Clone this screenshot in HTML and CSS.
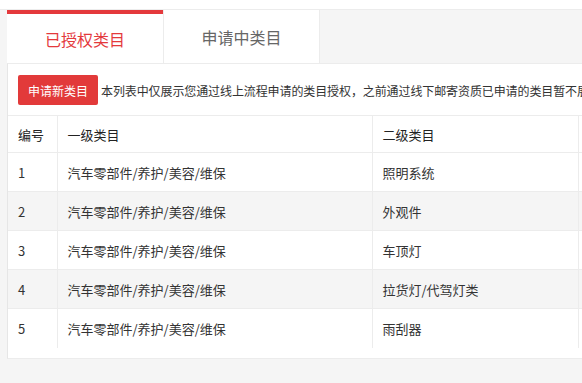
FILE: index.html
```html
<!DOCTYPE html>
<html lang="zh-CN">
<head>
    <meta charset="UTF-8">
    <meta name="viewport" content="width=device-width, initial-scale=1.0">
    <title>类目管理</title>
    <link rel="stylesheet" href="styles.css">
</head>
<body>
    <div class="leimu-wrap">
        <div class="leimu-tabs">
            <div class="leimu-tab active">已授权类目</div>
            <div class="leimu-tab">申请中类目</div>
        </div>

        <div class="leimu-panel">
            <div class="leimu-bar">
                <button class="shenqing-btn">申请新类目</button>
                <span class="leimu-tip">本列表中仅展示您通过线上流程申请的类目授权，之前通过线下邮寄资质已申请的类目暂不展示</span>
            </div>

            <table class="leimu-table">
                <colgroup>
                    <col class="col-num">
                    <col class="col-first">
                    <col class="col-second">
                    <col class="col-op">
                </colgroup>
                <thead>
                    <tr>
                        <th>编号</th>
                        <th>一级类目</th>
                        <th>二级类目</th>
                        <th></th>
                    </tr>
                </thead>
                <tbody>
                    <tr><td>1</td><td>汽车零部件/养护/美容/维保</td><td>照明系统</td><td></td></tr>
                    <tr><td>2</td><td>汽车零部件/养护/美容/维保</td><td>外观件</td><td></td></tr>
                    <tr><td>3</td><td>汽车零部件/养护/美容/维保</td><td>车顶灯</td><td></td></tr>
                    <tr><td>4</td><td>汽车零部件/养护/美容/维保</td><td>拉货灯/代驾灯类</td><td></td></tr>
                    <tr><td>5</td><td>汽车零部件/养护/美容/维保</td><td>雨刮器</td><td></td></tr>
                </tbody>
            </table>
        </div>
    </div>
</body>
</html>
```

FILE: styles.css
```css
* {
    margin: 0;
    padding: 0;
    box-sizing: border-box;
    font-family: "Noto Sans CJK SC", "Noto Sans", sans-serif;
}

body {
    background: #fff;
    padding-top: 9px;
    overflow: hidden;
    height: 100vh;
}

.leimu-wrap {
    height: 100%;
    background: #f5f5f5;
    border-top: 1px solid #ececec;
    padding-left: 7px;
    overflow: hidden;
}

.leimu-tabs {
    display: flex;
    height: 53px;
}

.leimu-tab {
    width: 157px;
    display: flex;
    align-items: center;
    justify-content: center;
    background: #fff;
    border-left: 1px solid #ececec;
    font-size: 16px;
    color: #666;
}

.leimu-tab.active {
    width: 156px;
    border-left: none;
    border-top: 4px solid #e4393c;
    color: #e4393c;
}

.leimu-tab:last-child {
    border-right: 1px solid #ececec;
}

.leimu-panel {
    background: #fff;
    border-top: 1px solid #ececec;
    border-left: 1px solid #e6e6e6;
    border-bottom: 1px solid #ececec;
    padding: 11px 0 10px 0;
}

.leimu-bar {
    display: flex;
    align-items: center;
    padding-left: 10px;
    margin-bottom: 10px;
    white-space: nowrap;
    overflow: hidden;
}

.shenqing-btn {
    flex-shrink: 0;
    width: 80px;
    height: 30px;
    border: none;
    border-radius: 2px;
    background: #e23a3a;
    color: #fff;
    font-size: 12px;
    margin-right: 3px;
    cursor: pointer;
}

.leimu-tip {
    font-size: 12px;
    letter-spacing: -0.1px;
    color: #333;
}

.leimu-table {
    border-collapse: collapse;
    table-layout: fixed;
    width: 770px;
    font-size: 13px;
    color: #333;
}

.col-num { width: 49px; }
.col-first { width: 315px; }
.col-second { width: 206px; }
.col-op { width: 200px; }

.leimu-table th,
.leimu-table td {
    text-align: left;
    font-weight: normal;
    padding: 0 10px;
    height: 39px;
    border-top: 1px solid #ececec;
    border-left: 1px solid #ececec;
}

.leimu-table th {
    height: 37px;
    color: #222;
}

.leimu-table th:first-child,
.leimu-table td:first-child {
    border-left: none;
}

.leimu-table tbody tr:nth-child(even) {
    background: #f5f5f5;
}
```
